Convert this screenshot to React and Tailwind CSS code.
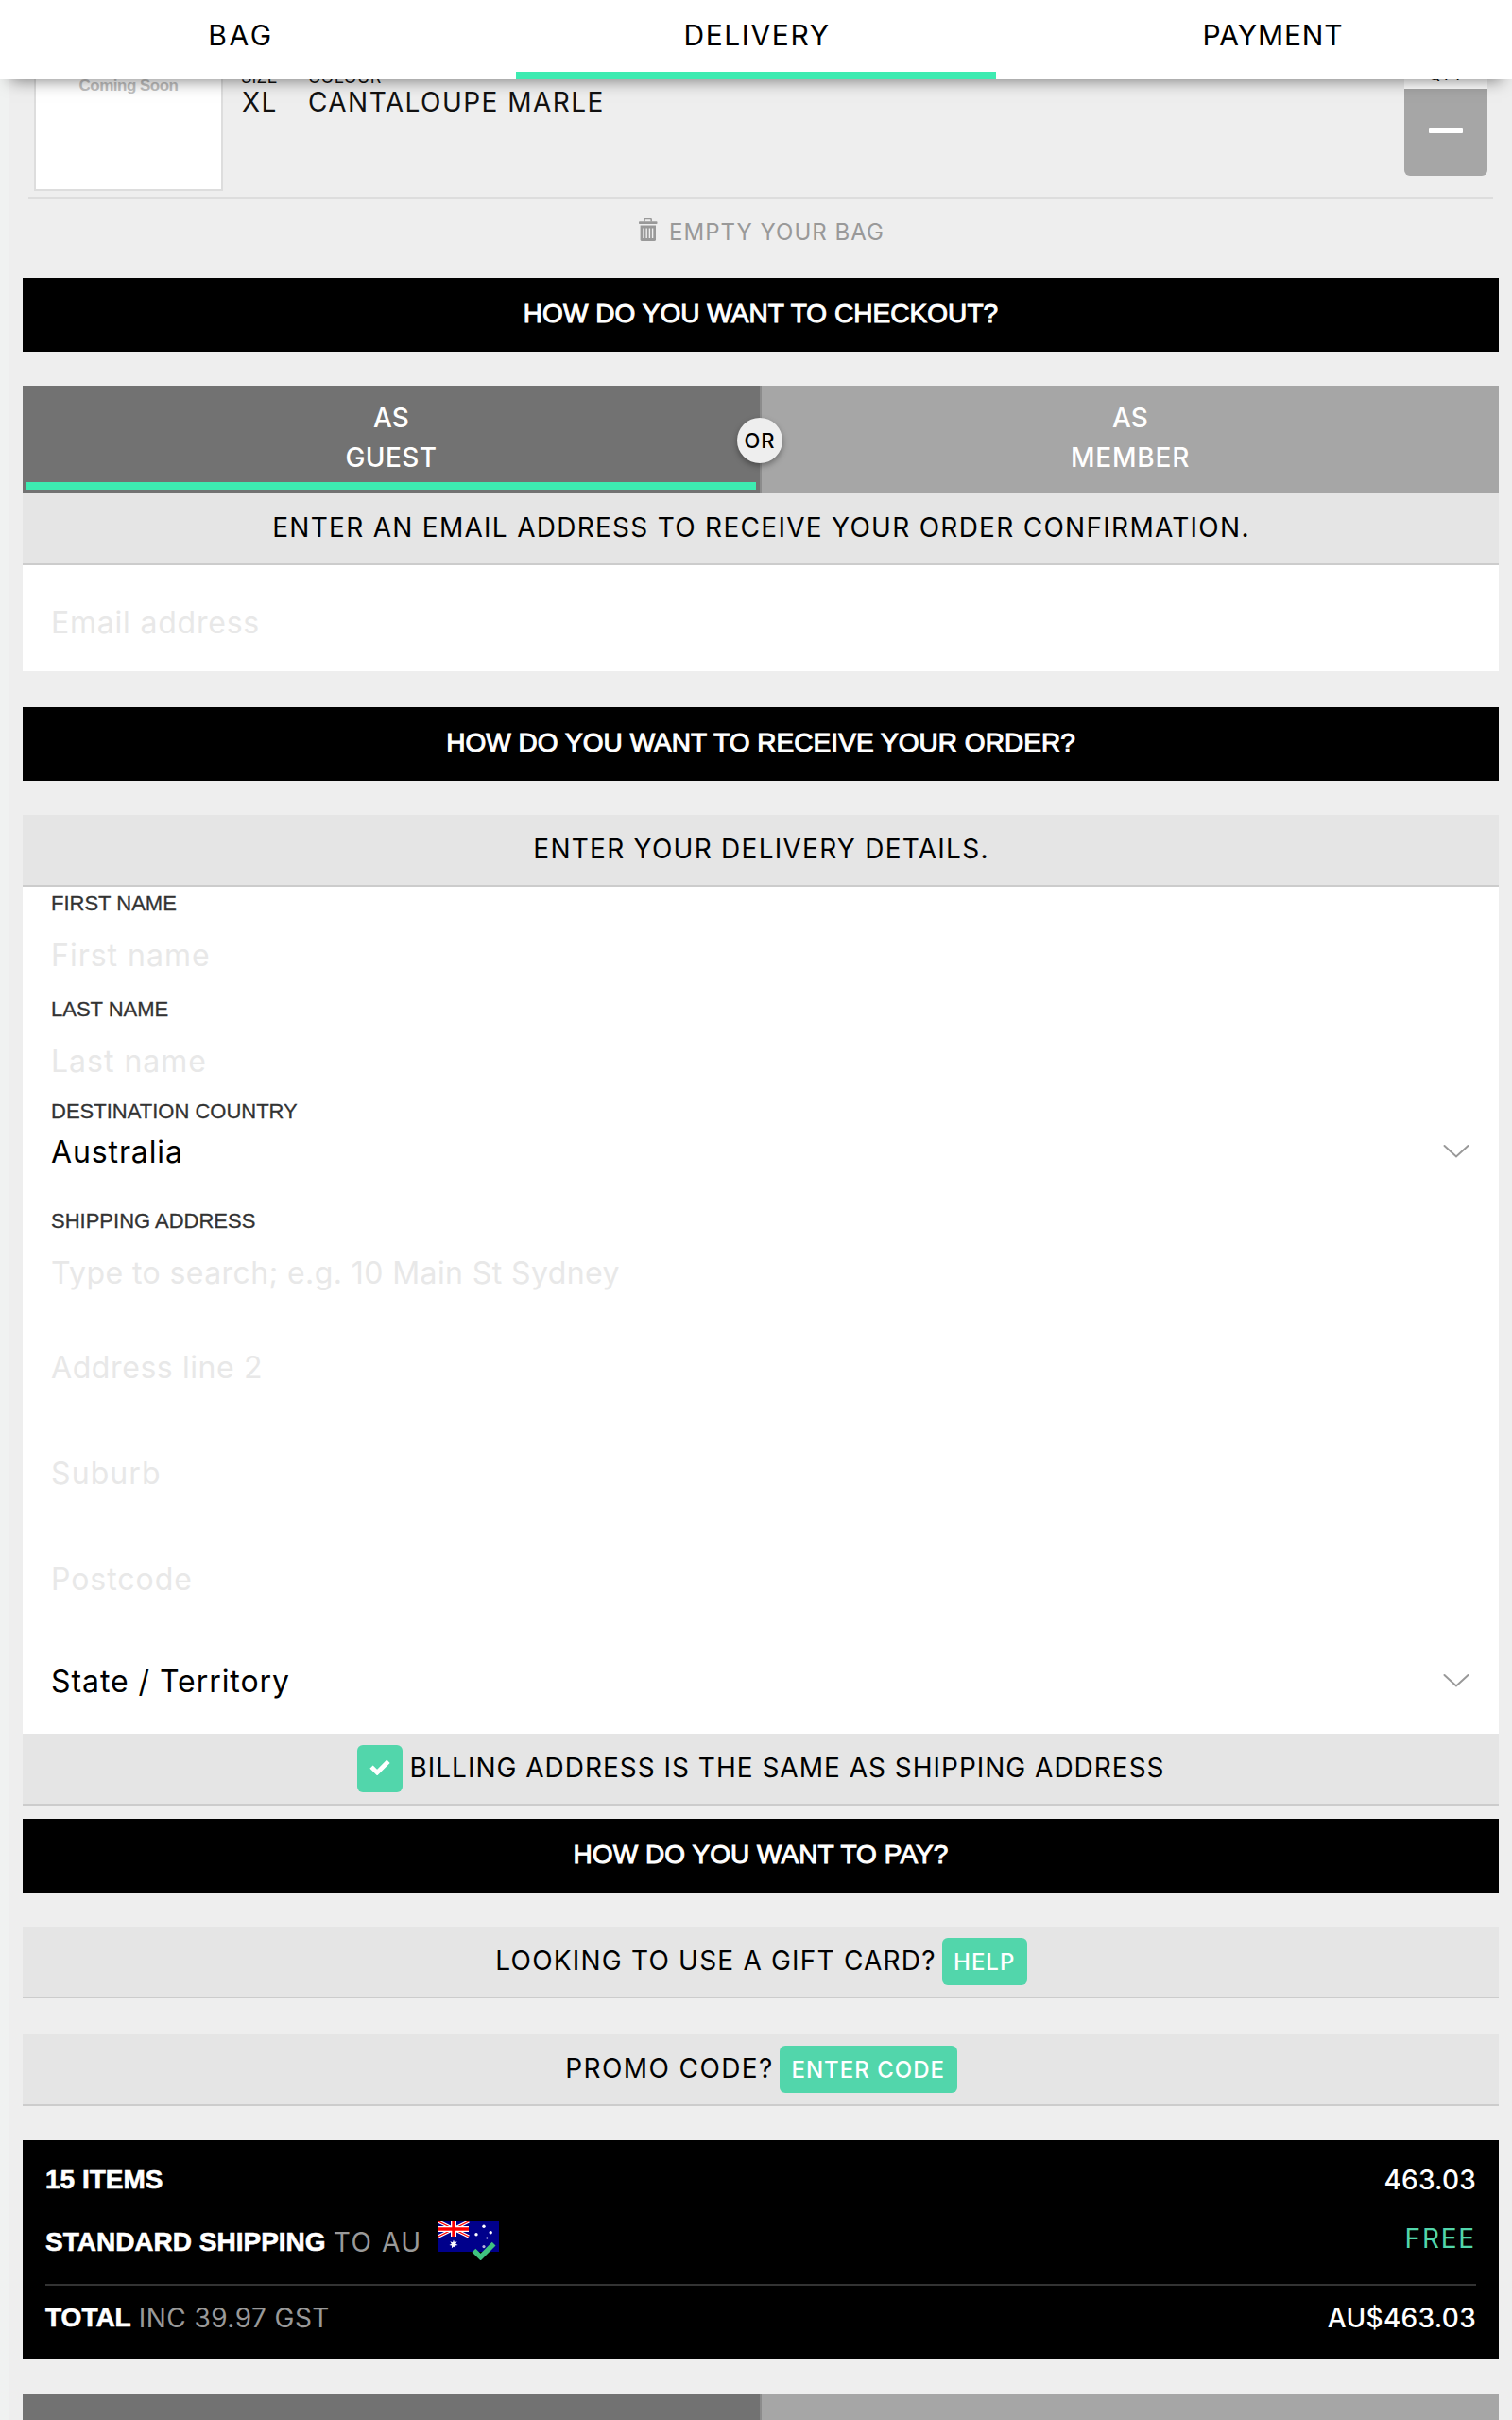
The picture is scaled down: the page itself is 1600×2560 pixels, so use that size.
import React from "react";

const placeholder = "text-[32px] text-[#e8e8e8]";

function StepTab({ children, active, tracking }) {
  return (
    <div className={`flex h-[84px] w-[508px] flex-col justify-between ${tracking}`}>
      <span className="block pl-0.5 text-center text-[30px] leading-[75px]">{children}</span>
      {active && <span className="block h-2 shrink-0 bg-[#3debb1]" />}
    </div>
  );
}

function SectionBar({ children }) {
  return (
    <h2 className="h-[78px] bg-black text-center font-['Liberation_Sans',sans-serif] text-[28px] leading-[76px] tracking-[0.05px] text-white [-webkit-text-stroke:1px_white]">
      {children}
    </h2>
  );
}

function Instruction({ children }) {
  return (
    <div className="flex h-[76px] items-center justify-center border-b-2 border-[#cccccc] bg-[#e5e5e5] pl-px text-[28px]">
      {children}
    </div>
  );
}

function Label({ children, short }) {
  return (
    <div
      className={`font-['Liberation_Sans',sans-serif] text-[22px] text-[#333] [-webkit-text-stroke:0.3px_#333] ${short ? "h-[29px] leading-[28px]" : "h-[37px] leading-[36px]"}`}
    >
      {children}
    </div>
  );
}

function LabelledField({ label, children, tracking }) {
  return (
    <div className="h-28">
      <Label>{label}</Label>
      <div className={`leading-[71px] ${placeholder} ${tracking}`}>{children}</div>
    </div>
  );
}

function PlainField({ children, tracking }) {
  return <div className={`h-28 pt-[9px] leading-[104px] ${placeholder} ${tracking}`}>{children}</div>;
}

function Chevron() {
  return (
    <svg className="mr-px mb-[2px] h-[16px] w-[28px]" viewBox="0 0 28 16" fill="none" stroke="#999" strokeWidth="2">
      <path d="M1.5 2 L14 13.5 L26.5 2" strokeLinecap="round" />
    </svg>
  );
}

function Trash() {
  return (
    <svg className="h-[25px] w-[20px]" viewBox="0 0 20 25">
      <path d="M6 3.5V1.6Q6 0.4 7.2 0.4H12Q13.2 0.4 13.2 1.6V3.5" fill="none" stroke="#999" strokeWidth="1.5" />
      <rect x="0" y="3.2" width="19.5" height="2.8" rx="0.8" fill="#999" />
      <path d="M1.6 7.5H18V22.4Q18 24 16.4 24H3.2Q1.6 24 1.6 22.4Z" fill="#999" />
      <path d="M5 10.5V21 M8.2 10.5V21 M11.4 10.5V21 M14.6 10.5V21" stroke="#eee" strokeWidth="1.4" />
    </svg>
  );
}

function Tick({ className, width, color }) {
  return (
    <svg className={className} viewBox="0 0 26 20" fill="none">
      <path d="M2.4 9.6 L9.6 16.6 L23.6 2.6" stroke={color} strokeWidth={width} />
    </svg>
  );
}

function Flag() {
  return (
    <span className="relative mb-3 ml-[17px] block h-8 w-16">
      <svg className="h-8 w-16" viewBox="0 0 64 32">
        <rect width="64" height="32" fill="#00008b" />
        <path d="M0 0L32 16M32 0L0 16" stroke="#fff" strokeWidth="3.6" />
        <path d="M0 0L32 16M32 0L0 16" stroke="#f00" strokeWidth="1.3" />
        <path d="M16 0V16M0 8H32" stroke="#fff" strokeWidth="6" />
        <path d="M16 0V16M0 8H32" stroke="#f00" strokeWidth="3.4" />
        <g fill="#fff">
          <path d="M16 19.6L17 22.2L19.6 21.3L18.2 23.7L20.6 25L17.9 25.5L18.1 28.2L16 26.5L13.9 28.2L14.1 25.5L11.4 25L13.8 23.7L12.4 21.3L15 22.2Z" />
          <circle cx="48" cy="5.3" r="1.7" />
          <circle cx="40" cy="13.8" r="1.7" />
          <circle cx="55.2" cy="11.8" r="1.7" />
          <circle cx="51.3" cy="17.5" r="1" />
          <circle cx="48" cy="26.6" r="1.6" opacity="0.7" />
        </g>
      </svg>
      <Tick className="absolute top-[21px] left-[35px] h-5 w-[26px]" width="5.4" color="#3fc280" />
    </span>
  );
}

function ActionButton({ children, className }) {
  return (
    <button className={`h-[50px] rounded-md bg-[#52d6ab] pt-px text-center text-[24px] font-medium text-white ${className}`}>
      {children}
    </button>
  );
}

function SummaryLabel({ children }) {
  return (
    <b className="font-['Liberation_Sans',sans-serif] [-webkit-text-stroke:0.6px_white]">{children}</b>
  );
}

export default function App() {
  return (
    <div className="h-[2560px] w-[1600px] overflow-hidden bg-[#f0f2f1] font-[Inter,sans-serif] text-black">
      <header className="relative z-10 flex h-[84px] justify-between bg-white shadow-[0_12px_16px_-11px_rgba(0,0,0,0.5)]">
        <StepTab tracking="tracking-[2.6px]">BAG</StepTab>
        <StepTab active tracking="tracking-[1.6px]">DELIVERY</StepTab>
        <StepTab tracking="tracking-[0.9px]">PAYMENT</StepTab>
      </header>

      <main className="ml-[10px] bg-[#eeeeee] pr-[14px] pl-[14px]">
        <div className="mx-1.5 flex h-[126px] items-end overflow-hidden border-b-2 border-[#dddddd] px-1.5">
          <div className="mb-1.5 flex h-[200px] w-[200px] shrink-0 flex-col items-center border-2 border-[#dddddd] bg-white pt-[75px] font-['Liberation_Sans',sans-serif] text-[17px] leading-6 font-bold tracking-[-0.5px] text-[#c2c2c2]">
            Coming Soon
          </div>
          <div className="mb-[85px] ml-[19px] w-[71px] text-[#111]">
            <div className="text-[18px] leading-[23px]">SIZE</div>
            <div className="pl-px text-[28px] leading-[30px] tracking-[1.4px]">XL</div>
          </div>
          <div className="mb-[85px] flex-1 text-[#111]">
            <div className="text-[18px] leading-[23px] tracking-[0.4px]">COLOUR</div>
            <div className="text-[28px] leading-[30px] tracking-[1.45px]">CANTALOUPE MARLE</div>
          </div>
          <div className="mb-[22px] w-[88px]">
            <div className="h-[29px] bg-white text-center text-[18px] leading-[27px]">QTY</div>
            <button className="flex h-[92px] w-full items-center justify-center rounded-b-md bg-[#a6a6a6] pb-[4px]">
              <span className="h-1.5 w-9 rounded-[1px] bg-white" />
            </button>
          </div>
        </div>

        <div className="flex h-[84px] items-start justify-center pl-0.5 text-[24px] leading-[71px] tracking-[1.02px] text-[#999]">
          <span className="mt-[21px] mr-3">
            <Trash />
          </span>
          EMPTY YOUR BAG
        </div>

        <SectionBar>HOW DO YOU WANT TO CHECKOUT?</SectionBar>

        <div className="relative mt-9 flex h-[114px] text-center text-[28px] leading-[42px] font-medium text-white">
          <div className="w-[780px] bg-[#727272] px-1 pt-[13px]">
            <div>AS</div>
            <div className="tracking-[0.4px]">GUEST</div>
            <div className="mt-[5px] h-2 bg-[#3debb1]" />
          </div>
          <div className="w-0.5 bg-[#8c8c8c]" />
          <div className="flex-1 bg-[#a6a6a6] pt-[13px]">
            <div>AS</div>
            <div className="tracking-[0.8px]">MEMBER</div>
          </div>
          <div className="absolute top-[34px] left-[756px] h-12 w-12 rounded-full bg-[#eeeeee] text-[22px] leading-[48px] tracking-[1px] text-black shadow-[0_3px_6px_rgba(0,0,0,0.35)]">
            OR
          </div>
        </div>
        <Instruction>
          <span className="pb-0.5 tracking-[1.28px]">ENTER AN EMAIL ADDRESS TO RECEIVE YOUR ORDER CONFIRMATION.</span>
        </Instruction>
        <div className="bg-white px-[30px]">
          <PlainField tracking="tracking-[0.78px]">Email address</PlainField>
        </div>

        <div className="mt-[38px]">
          <SectionBar>HOW DO YOU WANT TO RECEIVE YOUR ORDER?</SectionBar>
        </div>

        <div className="mt-9">
          <Instruction>
            <span className="pb-0.5 tracking-[1.26px]">ENTER YOUR DELIVERY DETAILS.</span>
          </Instruction>
        </div>
        <div className="bg-white px-[30px]">
          <LabelledField label="FIRST NAME" tracking="tracking-[1px]">First name</LabelledField>
          <LabelledField label="LAST NAME" tracking="tracking-[1px]">Last name</LabelledField>
          <div className="h-28">
            <Label short>DESTINATION COUNTRY</Label>
            <div className="flex h-[55px] items-center justify-between text-[32px] tracking-[0.89px]">
              Australia
              <Chevron />
            </div>
          </div>
          <LabelledField label="SHIPPING ADDRESS" tracking="tracking-[0.41px]">
            Type to search; e.g. 10 Main St Sydney
          </LabelledField>
          <PlainField tracking="tracking-[0.59px]">Address line 2</PlainField>
          <PlainField tracking="tracking-[1.1px]">Suburb</PlainField>
          <PlainField tracking="tracking-[0.95px]">Postcode</PlainField>
          <div className="flex h-28 items-center justify-between pt-px text-[32px] tracking-[0.94px]">
            State / Territory
            <Chevron />
          </div>
        </div>
        <Instruction>
          <span className="mr-[7px] flex h-[50px] w-12 items-center justify-center rounded-md bg-[#52d6ab] pb-1">
            <Tick className="h-[17px] w-[22px]" width="5.6" color="#fff" />
          </span>
          <span className="pb-0.5 tracking-[0.99px]">BILLING ADDRESS IS THE SAME AS SHIPPING ADDRESS</span>
        </Instruction>

        <div className="mt-3.5">
          <SectionBar>HOW DO YOU WANT TO PAY?</SectionBar>
        </div>

        <div className="mt-9">
          <Instruction>
            <span className="mr-[6px] pb-0.5 tracking-[1.2px]">LOOKING TO USE A GIFT CARD?</span>
            <ActionButton className="w-[90px] tracking-[1px]">HELP</ActionButton>
          </Instruction>
        </div>
        <div className="mt-[38px]">
          <Instruction>
            <span className="mr-[6px] pb-0.5 tracking-[1.4px]">PROMO CODE?</span>
            <ActionButton className="w-[188px] tracking-[1px]">ENTER CODE</ActionButton>
          </Instruction>
        </div>

        <section className="mt-9 h-[232px] bg-black px-6 pt-5 text-[28px] text-white">
          <div className="flex h-11 items-center justify-between">
            <SummaryLabel>15 ITEMS</SummaryLabel>
            <span className="font-medium tracking-[0.2px]">463.03</span>
          </div>
          <div className="flex h-[88px] items-center">
            <SummaryLabel>STANDARD SHIPPING</SummaryLabel>
            <span className="ml-[8px] tracking-[1.6px] text-[#999]">TO AU</span>
            <Flag />
            <span className="ml-auto pb-2 tracking-[1.8px] text-[#52d6ab]">FREE</span>
          </div>
          <div className="flex h-[70px] items-center border-t-2 border-[#333]">
            <SummaryLabel>TOTAL</SummaryLabel>
            <span className="ml-[8px] tracking-[0.45px] text-[#999]">INC 39.97 GST</span>
            <span className="ml-auto font-medium tracking-[0.3px]">AU$463.03</span>
          </div>
        </section>

        <div className="mt-9 flex h-7">
          <div className="w-[780px] bg-[#727272]" />
          <div className="w-0.5 bg-[#8c8c8c]" />
          <div className="flex-1 bg-[#a6a6a6]" />
        </div>
      </main>
    </div>
  );
}
